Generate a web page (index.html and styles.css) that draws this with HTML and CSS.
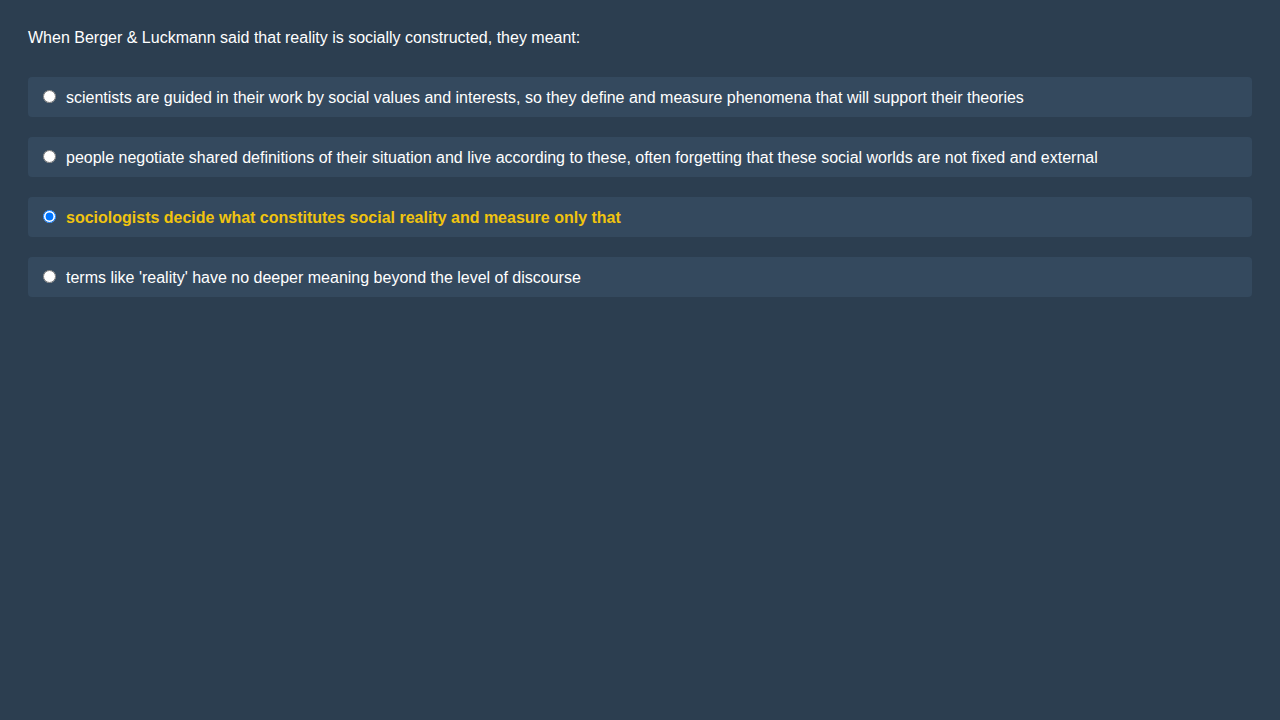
FILE: index.html
```html
<!DOCTYPE html>
<html>
<head>
<meta charset="utf-8">
<link rel="stylesheet" href="styles.css">
</head>
<body>
<div class="quiz">
  <p class="question">When Berger &amp; Luckmann said that reality is socially constructed, they meant:</p>
  <div class="options">
    <label class="option"><input type="radio" name="q"><span class="text">scientists are guided in their work by social values and interests, so they define and measure phenomena that will support their theories</span></label>
    <label class="option"><input type="radio" name="q"><span class="text">people negotiate shared definitions of their situation and live according to these, often forgetting that these social worlds are not fixed and external</span></label>
    <label class="option selected"><input type="radio" name="q" checked><span class="text">sociologists decide what constitutes social reality and measure only that</span></label>
    <label class="option"><input type="radio" name="q"><span class="text">terms like 'reality' have no deeper meaning beyond the level of discourse</span></label>
  </div>
</div>
</body>
</html>
```
FILE: styles.css
```css
html, body {
  margin: 0;
  background: #2c3e50;
  height: 100%;
}
body {
  font-family: "Liberation Sans", Arial, sans-serif;
  font-size: 16px;
  color: #ffffff;
}
.quiz {
  padding: 29px 28px;
}
.question {
  margin: 0 0 30px 0;
  line-height: 18px;
}
.options {
  display: flex;
  flex-direction: column;
  gap: 20px;
}
.option {
  display: flex;
  align-items: center;
  height: 40px;
  box-sizing: border-box;
  padding: 1px 10px 0 10px;
  background: #34495e;
  border-radius: 4px;
  cursor: pointer;
}
.option input {
  margin: 0 3px 2px 5px;
}
.option .text {
  margin-left: 7px;
}
.option.selected .text {
  color: #f1c40f;
  font-weight: bold;
}
```
